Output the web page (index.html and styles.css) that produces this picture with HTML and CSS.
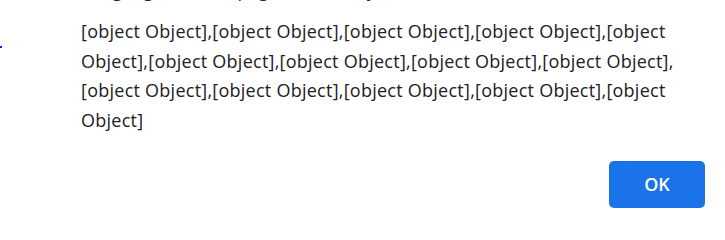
FILE: index.html
```html
<!DOCTYPE html>
<html>
<head>
<meta charset="utf-8">
<link rel="stylesheet" href="styles.css">
</head>
<body>
<div class="dialog">
  <span class="focus-dot"></span>
  <div class="content">
    <div class="title">Long tag for these page will not say</div>
    <div class="message">[object Object],[object Object],[object Object],[object Object],[object Object],[object Object],[object Object],[object Object],[object Object],[object Object],[object Object],[object Object],[object Object],[object Object]</div>
    <div class="actions">
      <button class="ok">OK</button>
    </div>
  </div>
</div>
</body>
</html>
```

FILE: styles.css
```css
html, body {
  margin: 0;
  padding: 0;
  background: #ffffff;
}
.dialog {
  position: relative;
  width: 725px;
  height: 227px;
  overflow: hidden;
  font-family: "Open Sans", "Noto Sans", sans-serif;
  color: #202124;
}
.focus-dot {
  position: absolute;
  left: 0;
  top: 46px;
  width: 2px;
  height: 2px;
  background: #1a1aff;
}
.content {
  padding: 0 20px 0 81px;
}
.title {
  font-size: 18px;
  line-height: 24px;
  height: 24px;
  margin-top: -22px;
  white-space: nowrap;
}
.message {
  font-size: 18px;
  letter-spacing: 0.25px;
  line-height: 29.7px;
  margin-top: 15px;
}
.actions {
  display: flex;
  justify-content: flex-end;
  margin-top: 25px;
}
.ok {
  width: 96px;
  height: 47px;
  border: none;
  border-radius: 5px;
  background: #1a73e8;
  color: #ffffff;
  font-family: "Open Sans", "Noto Sans", sans-serif;
  font-size: 18px;
  font-weight: 600;
  padding: 0;
}
```
